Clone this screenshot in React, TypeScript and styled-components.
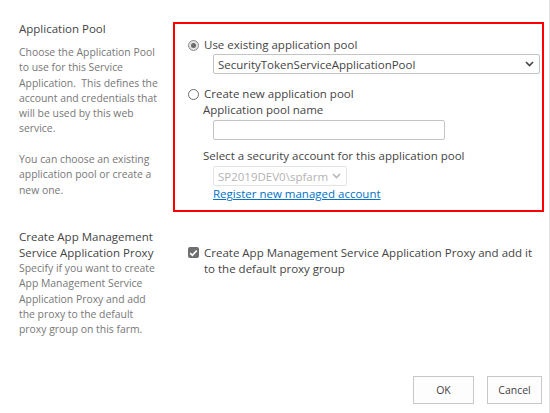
import React from "react"
import styled, { createGlobalStyle } from "styled-components"

const GlobalStyle = createGlobalStyle`
  html, body {
    margin: 0;
    padding: 0;
    background: #ffffff;
  }
  body {
    font-family: "Open Sans", "Noto Sans", sans-serif;
    color: #444444;
  }
`

const Page = styled.div`
  box-sizing: border-box;
  width: 550px;
  height: 413px;
  padding: 21px 0 0 19px;
  border-right: 1px solid #e6e6e6;
  display: flex;
  flex-direction: column;
`

const Section = styled.div<{ $top?: number }>`
  display: grid;
  grid-template-columns: 154px 371px;
  margin-top: ${({ $top }) => $top ?? 0}px;
`

const Heading = styled.div`
  font-size: 11.5px;
  line-height: 16px;
  color: #444444;
  white-space: nowrap;
`

const Description = styled.div<{ $gap?: number }>`
  margin-top: ${({ $gap }) => $gap ?? 0}px;
  font-size: 10.4px;
  line-height: 15.3px;
  color: #777777;
  white-space: nowrap;
`

const Highlight = styled.div`
  box-sizing: border-box;
  margin-top: 1px;
  height: 190px;
  border: 2px solid #ff0000;
  padding: 13px 0 0 13px;
`

const Plain = styled.div`
  padding: 16px 0 0 15px;
`

const OptionRow = styled.label<{ $top?: number }>`
  display: flex;
  align-items: center;
  gap: 5px;
  margin-top: ${({ $top }) => $top ?? 0}px;
  font-size: 11.5px;
  line-height: 16px;
  color: #444444;
  white-space: nowrap;
`

const Radio = styled.span<{ $checked?: boolean }>`
  box-sizing: border-box;
  width: 11px;
  height: 11px;
  border-radius: 50%;
  border: 1px solid ${({ $checked }) => ($checked ? "#8a8a8a" : "#6e6e6e")};
  background: ${({ $checked }) => ($checked ? "#e3e3e3" : "#ffffff")};
  display: flex;
  align-items: center;
  justify-content: center;
  flex-shrink: 0;

  &::after {
    content: "";
    width: 5px;
    height: 5px;
    border-radius: 50%;
    background: #6b6b6b;
    display: ${({ $checked }) => ($checked ? "block" : "none")};
  }
`

const Nested = styled.div`
  padding-left: 15px;
`

const FieldLabel = styled.div<{ $top?: number }>`
  margin-top: ${({ $top }) => $top ?? 0}px;
  font-size: 11.5px;
  line-height: 16px;
  color: #444444;
  white-space: nowrap;
`

const Control = styled.div<{ $width: number; $top?: number; $disabled?: boolean }>`
  box-sizing: border-box;
  margin: ${({ $top }) => $top ?? 0}px 0 0 10px;
  width: ${({ $width }) => $width}px;
  height: 20px;
  border: 1px solid ${({ $disabled }) => ($disabled ? "#e4e4e4" : "#c4c4c4")};
  border-radius: 2px;
  background: #ffffff;
  display: flex;
  align-items: center;
  justify-content: space-between;
  padding: 0 5px 0 4px;
  font-size: 11.5px;
  color: ${({ $disabled }) => ($disabled ? "#b3b3b3" : "#444444")};
  white-space: nowrap;
`

const ChevronIcon = styled.svg<{ $disabled?: boolean }>`
  width: 9px;
  height: 6px;
  flex-shrink: 0;
  stroke: ${({ $disabled }) => ($disabled ? "#b8b8b8" : "#444444")};
`

const Link = styled.a`
  display: block;
  margin-left: 10px;
  font-size: 11.5px;
  line-height: 16px;
  color: #0072c6;
  text-decoration: underline;
  white-space: nowrap;
`

const CheckRow = styled.label`
  display: flex;
  align-items: flex-start;
  gap: 5px;
  font-size: 11.5px;
  line-height: 16px;
  color: #444444;
  white-space: nowrap;
`

const Check = styled.span`
  box-sizing: border-box;
  margin-top: 2px;
  width: 11px;
  height: 11px;
  border-radius: 2px;
  background: #6f6f6f;
  display: flex;
  align-items: center;
  justify-content: center;
  flex-shrink: 0;
`

const Footer = styled.div`
  display: flex;
  justify-content: flex-end;
  gap: 13px;
  margin-top: auto;
  margin-bottom: 9px;
  padding-right: 7px;
`

const Button = styled.button<{ $width: number }>`
  box-sizing: border-box;
  width: ${({ $width }) => $width}px;
  height: 28px;
  border: 1px solid #c8c8c8;
  border-radius: 0;
  background: #fdfdfd;
  font-family: "Open Sans", "Noto Sans", sans-serif;
  font-size: 10.5px;
  color: #444444;
  padding: 0;
`

const Chevron = ({ disabled }: { disabled?: boolean }) => (
  <ChevronIcon $disabled={disabled} viewBox="0 0 9 6" fill="none" strokeWidth={1.6}>
    <polyline points="1,1 4.5,4.5 8,1" />
  </ChevronIcon>
)

export default function App() {
  return (
    <>
      <GlobalStyle />
      <Page>
        <Section>
          <div>
            <Heading>Application Pool</Heading>
            <Description $gap={8}>
              Choose the Application Pool
              <br />
              to use for this Service
              <br />
              Application.&nbsp; This defines the
              <br />
              account and credentials that
              <br />
              will be used by this web
              <br />
              service.
              <br />
              <br />
              You can choose an existing
              <br />
              application pool or create a
              <br />
              new one.
            </Description>
          </div>
          <Highlight>
            <OptionRow>
              <Radio $checked />
              Use existing application pool
            </OptionRow>
            <Nested>
              <Control $width={327} $top={1}>
                SecurityTokenServiceApplicationPool
                <Chevron />
              </Control>
            </Nested>
            <OptionRow $top={12}>
              <Radio />
              Create new application pool
            </OptionRow>
            <Nested>
              <FieldLabel>Application pool name</FieldLabel>
              <Control $width={232} $top={2} />
              <FieldLabel $top={8}>Select a security account for this application pool</FieldLabel>
              <Control $width={134} $top={2} $disabled>
                SP2019DEV0\spfarm
                <Chevron disabled />
              </Control>
              <Link href="#">Register new managed account</Link>
            </Nested>
          </Highlight>
        </Section>

        <Section $top={17}>
          <div>
            <Heading>
              Create App Management
              <br />
              Service Application Proxy
            </Heading>
            <Description>
              Specify if you want to create
              <br />
              App Management Service
              <br />
              Application Proxy and add
              <br />
              the proxy to the default
              <br />
              proxy group on this farm.
            </Description>
          </div>
          <Plain>
            <CheckRow>
              <Check>
                <svg width="9" height="8" viewBox="0 0 9 8" fill="none" stroke="#ffffff" strokeWidth={1.7}>
                  <polyline points="1.2,4.2 3.4,6.3 7.8,1.5" />
                </svg>
              </Check>
              <span>
                Create App Management Service Application Proxy and add it
                <br />
                to the default proxy group
              </span>
            </CheckRow>
          </Plain>
        </Section>

        <Footer>
          <Button $width={61}>OK</Button>
          <Button $width={55}>Cancel</Button>
        </Footer>
      </Page>
    </>
  )
}
